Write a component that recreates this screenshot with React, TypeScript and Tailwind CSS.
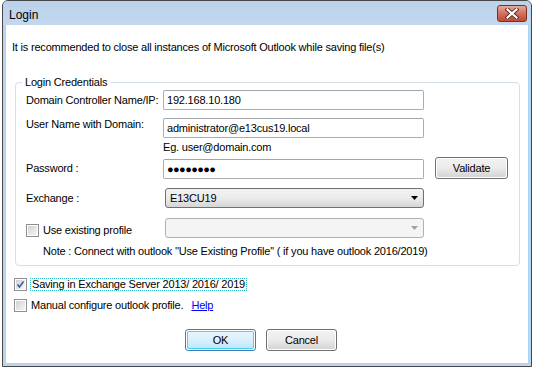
import React from "react";

const font = { fontFamily: '"Liberation Sans", Arial, sans-serif' };

function CheckBox({ checked }: { checked?: boolean }) {
  return (
    <div className="w-[13px] h-[13px] border border-[#8f8f8f] bg-white p-[1px] shrink-0">
      <div className="w-full h-full bg-gradient-to-br from-[#d2d2d2] to-[#f6f6f6] flex items-center justify-center">
        {checked && (
          <svg width="9" height="9" viewBox="0 0 9 9">
            <path d="M1.5 4.5 L3.5 7 L7.5 1.5" stroke="#3d5a9e" strokeWidth="1.6" fill="none" />
          </svg>
        )}
      </div>
    </div>
  );
}

function TextBox({ children, className = "" }: { children?: React.ReactNode; className?: string }) {
  return (
    <div
      className={`w-[261px] h-[20px] border border-[#abadb3] border-t-[#a0a4ab] bg-white rounded-[2px] flex items-center pl-[3px] text-[11px] text-black ${className}`}
    >
      {children}
    </div>
  );
}

function Button({ label, focused, className = "" }: { label: string; focused?: boolean; className?: string }) {
  return (
    <div
      className={`rounded-[3px] border ${focused ? "border-[#3c7fb1]" : "border-[#707070]"} p-[1px] ${className}`}
    >
      <div
        className={`w-full h-full rounded-[2px] flex items-center justify-center text-[11px] text-black ${
          focused
            ? "bg-gradient-to-b from-[#eaf6fd] via-[#d9f0fc] to-[#bee6fd] shadow-[inset_0_0_0_1px_#48d2f9]"
            : "bg-gradient-to-b from-[#f2f2f2] via-[#ebebeb] to-[#d4d4d4]"
        }`}
      >
        {label}
      </div>
    </div>
  );
}

export default function App() {
  return (
    <div className="w-[533px] h-[368px] bg-white overflow-hidden" style={font}>
      <div className="ml-[2px] w-[530px] h-[367px] border border-[#474747] rounded-t-[6px] bg-[#bdd4ec] flex flex-col overflow-hidden">
        {/* Title bar */}
        <div className="h-[24px] shrink-0 flex items-start bg-gradient-to-b from-[#bad2ea] to-[#c3d8ee] relative">
          <span className="ml-[6px] mt-[7px] text-[12px] leading-[14px] text-black">Login</span>
          <div className="absolute left-[494px] top-[4px] w-[30px] h-[17px] rounded-[3px] border border-[#7b3024] bg-gradient-to-b from-[#e9a99a] via-[#d2705d] to-[#c24a33] flex items-center justify-center">
            <svg width="14" height="11" viewBox="0 0 14 11">
              <path d="M2.5 1.5 L11.5 9.5 M11.5 1.5 L2.5 9.5" stroke="#5a2a22" strokeWidth="4" strokeLinecap="square" />
              <path d="M2.5 1.5 L11.5 9.5 M11.5 1.5 L2.5 9.5" stroke="#ffffff" strokeWidth="2.2" strokeLinecap="square" />
            </svg>
          </div>
        </div>
        {/* Content */}
        <div className="flex-1 mx-[2px] mb-[2px] bg-white border border-[#a6d6f5] border-t-0 relative flex flex-col text-[11px] text-black tracking-[-0.2px] whitespace-nowrap">
          <div className="pt-[15px] pl-[6px] leading-[14px]">
            It is recommended to close all instances of Microsoft Outlook while saving file(s)
          </div>

          {/* Group box */}
          <div className="relative ml-[9px] mt-[28px] w-[505px] h-[184px] border border-[#d5dfe5] rounded-[4px]">
            <span className="absolute left-[6px] top-[-8px] bg-white px-[3px] leading-[14px]">Login Credentials</span>

            <div className="pl-[10px] pt-[7px] flex flex-col">
              {/* Row 1 */}
              <div className="flex items-center h-[20px]">
                <div className="w-[137px]">Domain Controller Name/IP:</div>
                <TextBox>192.168.10.180</TextBox>
              </div>
              {/* Row 2 */}
              <div className="flex items-start h-[20px] mt-[8px]">
                <div className="w-[137px] leading-[14px] mt-[-1px]">User Name with Domain:</div>
                <TextBox>administrator@e13cus19.local</TextBox>
              </div>
              <div className="pl-[137px] leading-[14px] mt-[2px]">Eg. user@domain.com</div>
              {/* Row 3 */}
              <div className="flex items-center h-[22px] mt-[3px]">
                <div className="w-[137px]">Password :</div>
                <TextBox className="mt-[2px] h-[20px]">
                  <span className="text-[11px] font-bold tracking-[-0.6px] leading-none">●●●●●●●●</span>
                </TextBox>
                <Button label="Validate" className="ml-[11px] w-[73px] h-[22px]" />
              </div>
              {/* Row 4 */}
              <div className="flex items-center h-[20px] mt-[9px]">
                <div className="w-[137px]">Exchange :</div>
                <div className="ml-[2px] w-[259px] h-[20px] rounded-[3px] border border-[#707070] bg-gradient-to-b from-[#f2f2f2] via-[#ebebeb] to-[#d6d6d6] flex items-center pl-[4px] pr-[5px]">
                  <span className="flex-1">E13CU19</span>
                  <svg width="7" height="4" viewBox="0 0 7 4">
                    <path d="M0 0 H7 L3.5 4 Z" fill="#000" />
                  </svg>
                </div>
              </div>
              {/* Row 5 */}
              <div className="flex items-center h-[20px] mt-[10px]">
                <div className="w-[137px] flex items-center gap-[4px] pt-[4px]">
                  <CheckBox />
                  <span>Use existing profile</span>
                </div>
                <div className="ml-[2px] w-[259px] h-[20px] rounded-[3px] border border-[#adb2b5] bg-[#f4f4f4] flex items-center justify-end pr-[5px]">
                  <svg width="7" height="4" viewBox="0 0 7 4">
                    <path d="M0 0 H7 L3.5 4 Z" fill="#a0a0a0" />
                  </svg>
                </div>
              </div>
              <div className="pl-[17px] mt-[6px] leading-[14px]">
                Note : Connect with outlook ''Use Existing Profile'' ( if you have outlook 2016/2019)
              </div>
            </div>
          </div>

          {/* Checkboxes */}
          <div className="ml-[8px] mt-[12px] flex items-center gap-[3px] h-[13px]">
            <CheckBox checked />
            <span className="border border-dotted border-[#2fb6c6] px-[1px] leading-[11px]">
              Saving in Exchange Server 2013/ 2016/ 2019
            </span>
          </div>
          <div className="ml-[8px] mt-[8px] flex items-center gap-[4px] h-[13px]">
            <CheckBox />
            <span>Manual configure outlook profile.</span>
            <span className="ml-[4px] text-[#0000ff] underline">Help</span>
          </div>

          {/* Buttons */}
          <div className="mt-[17px] flex pl-[179px] gap-[10px]">
            <Button label="OK" focused className="w-[71px] h-[22px]" />
            <Button label="Cancel" className="w-[71px] h-[22px]" />
          </div>
        </div>
      </div>
    </div>
  );
}
